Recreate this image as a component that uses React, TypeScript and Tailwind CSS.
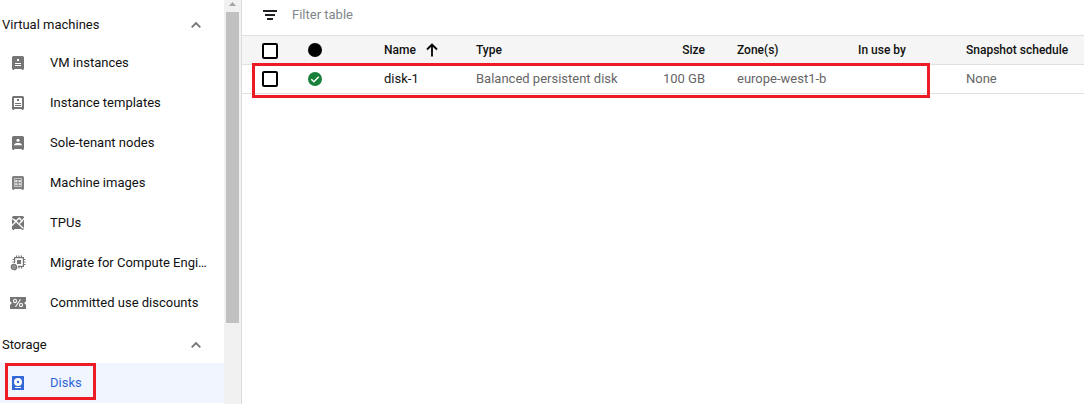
import type { ReactNode } from "react";

const G = "#757575";

const Icon = ({ children }: { children: ReactNode }) => (
  <svg viewBox="0 0 16 16" className="h-4 w-4 shrink-0">
    {children}
  </svg>
);

const body = "M3.500 1h9A1.500 1.500 0 0 1 14 2.500V14h-.6v1h-1.600v-1H4.200v1H2.600v-1H2V2.500A1.500 1.500 0 0 1 3.500 1Z";

const VmIcon = () => (
  <Icon>
    <path fill={G} d={body} />
    <path fill="#fff" d="M7 4h2v2H7zM5 8h6v1H5zM5 10h6v1H5z" />
  </Icon>
);

const TemplateIcon = () => (
  <Icon>
    <path fill={G} d={body} />
    <path fill="#fff" d="M4 3h8v9H4z" />
    <path fill={G} d="M7 4h2v2H7zM5 8h6v1H5zM5 10h6v1H5z" />
  </Icon>
);

const TenantIcon = () => (
  <Icon>
    <path fill={G} d={body} />
    <circle cx="8" cy="5.200" r="1.500" fill="#fff" />
    <path fill="#fff" d="M4 10.200C4 8.600 6 8 8 8s4 .6 4 2.200Z" />
  </Icon>
);

const ImageIcon = () => (
  <Icon>
    <path fill="#808080" d={body} />
    <path fill="none" stroke="#c4c4c4" strokeWidth="1" d="M4.500 3.500h7v8h-7z" />
    <path fill="#e4e4e4" d="M5.200 5h2.300v2.200H5.200zM8.500 5h2.300v2.200H8.500zM5.200 8.200h2.300v2H5.200zM8.500 8.200h2.300v2H8.500z" />
  </Icon>
);

const TpuIcon = () => (
  <Icon>
    <path fill={G} d={body} />
    <path fill="none" stroke="#fff" strokeWidth="1.200" d="M2 3.500l2.500 1.500L13.500 13.500M2 10.500l3.500-3.500M6 6l3.200-3M9.500 8.500l2-2L14 3.500M10 3.500l2 3" />
    <circle cx="5" cy="5.500" r="1.100" fill="#fff" />
    <circle cx="9.500" cy="3.500" r="1" fill="#fff" />
    <circle cx="11.500" cy="6.500" r="1" fill="#fff" />
  </Icon>
);

const MigrateIcon = () => (
  <Icon>
    <path
      fill="none"
      stroke={G}
      strokeWidth="1.2"
      d="M4.600 8V2.600h8.800v8.800H8M6.500 2.500V.4M9 2.500V.4M11.500 2.500V.4M13.500 4.500h2M13.500 7h2M13.500 9.500h2M4.500 4.500h-2M4.500 7h-2M9 11.500v2M11.500 11.500v2"
    />
    <path fill={G} d="M7 5h4v4H7z" />
    <circle cx="4" cy="12" r="2.500" fill="#ccc" stroke={G} strokeWidth="1.700" />
    <path stroke={G} d="M4 10.500v3M2.500 12h3" />
  </Icon>
);

const DiscountIcon = () => (
  <Icon>
    <path fill={G} d="M0 2h16v4.500a1.500 1.500 0 0 0 0 3V14H0V9.500a1.500 1.500 0 0 0 0-3Z" />
    <g fill="none" stroke="#fff" strokeWidth="1.100">
      <ellipse cx="5" cy="6" rx="1.500" ry="1.700" />
      <ellipse cx="11" cy="10" rx="1.500" ry="1.700" />
      <path d="M10.500 4.200l-5 7.600" />
    </g>
  </Icon>
);

const DiskIcon = () => (
  <Icon>
    <rect x="2" y="1" width="12" height="14" rx=".6" fill="#3367d6" />
    <circle cx="8" cy="7" r="4" fill="#fff" />
    <circle cx="8" cy="7" r="1.200" fill="#3367d6" />
    <path fill="#fff" d="M5 12h6v1H5z" />
  </Icon>
);

const items = [
  { label: "VM instances", icon: <VmIcon /> },
  { label: "Instance templates", icon: <TemplateIcon /> },
  { label: "Sole-tenant nodes", icon: <TenantIcon /> },
  { label: "Machine images", icon: <ImageIcon /> },
  { label: "TPUs", icon: <TpuIcon /> },
  { label: "Migrate for Compute Engi…", icon: <MigrateIcon /> },
  { label: "Committed use discounts", icon: <DiscountIcon /> },
];

const SectionHeader = ({ children }: { children: string }) => (
  <div className="flex h-10 shrink-0 items-center justify-between pr-[23px] pl-[2px]">
    <span className="pt-[4px]">{children}</span>
    <svg viewBox="0 0 10 6" className="mt-[3px] h-[6px] w-[10px]">
      <path d="M.7 5.300 5 1l4.300 4.300" fill="none" stroke="#757575" strokeWidth="1.800" />
    </svg>
  </div>
);

const Checkbox = () => <span className="block h-4 w-4 rounded-[2px] border-2 border-black bg-white" />;

const columns = "grid grid-cols-[20px_46px_56px_92px_147px_82px_32px_121px_108px_1fr] items-center whitespace-nowrap";

export default function App() {
  return (
    <div className="relative flex h-[404px] w-[1084px] overflow-hidden bg-white font-['Roboto',sans-serif] text-[13px] leading-5 text-[#111]">
      <nav className="flex w-[224px] shrink-0 flex-col pt-[3px]">
        <SectionHeader>Virtual machines</SectionHeader>
        {items.map((item) => (
          <div key={item.label} className="flex h-10 shrink-0 items-center gap-6 pl-[10px]">
            {item.icon}
            <span className="whitespace-nowrap">{item.label}</span>
          </div>
        ))}
        <SectionHeader>Storage</SectionHeader>
        <div className="relative flex h-10 shrink-0 items-center gap-6 bg-[#f0f5ff] pl-[10px] text-[#3367d6]">
          <DiskIcon />
          <span>Disks</span>
          <span className="absolute top-0 left-[5px] h-[37px] w-[91px] border-3 border-[#ed1c24]" />
        </div>
      </nav>

      <div className="flex w-[17px] shrink-0 flex-col items-center bg-[#f1f1f1]">
        <svg viewBox="0 0 17 12" className="h-3 w-[17px] shrink-0">
          <path d="M5 6h7L8.500 2Z" fill="#a3a3a3" />
        </svg>
        <div className="h-[311px] w-[13px] bg-[#c1c1c1]" />
      </div>

      <main className="relative min-w-0 flex-1 border-l border-[#dcdcdc]">
        <div className="flex h-[35px] items-center pb-[5px] pl-[21px]">
          <svg viewBox="0 0 14 10" className="h-[10px] w-[14px]">
            <path d="M0 0h14v2H0zM2 4h10v2H2zM4 8h6v2H4z" fill="#202124" />
          </svg>
          <span className="ml-[15px] text-[#80868b]">Filter table</span>
        </div>
        <div className={`${columns} h-[30px] border-y border-[#e0e0e0] bg-[#f5f5f5] pl-5 text-[12px] font-medium`}>
          <div className="pt-px">
            <Checkbox />
          </div>
          <span className="ml-[26px] h-[14px] w-[14px] rounded-full bg-black" />
          <span />
          <span className="flex items-center">
            Name
            <svg viewBox="0 0 12 14" className="ml-[10px] h-[14px] w-3">
              <path d="M6 13.500V1.500M1 6.500l5-5 5 5" fill="none" stroke="#000" strokeWidth="1.800" />
            </svg>
          </span>
          <span>Type</span>
          <span className="text-right">Size</span>
          <span />
          <span>Zone(s)</span>
          <span>In use by</span>
          <span>Snapshot schedule</span>
        </div>
        <div className={`${columns} h-[29px] border-b border-[#e0e0e0] pl-5 text-[#666]`}>
          <Checkbox />
          <svg viewBox="0 0 14 14" className="ml-[26px] h-[14px] w-[14px]">
            <circle cx="7" cy="7" r="7" fill="#188038" />
            <path d="M3.300 7.200 5.900 9.700 10.800 4.700" fill="none" stroke="#fff" strokeWidth="1.500" />
          </svg>
          <span />
          <span className="text-[#111]">disk-1</span>
          <span>Balanced persistent disk</span>
          <span className="text-right">100 GB</span>
          <span />
          <span>europe-west1-b</span>
          <span />
          <span>None</span>
        </div>
        <span className="absolute top-[63px] left-[10px] h-[35px] w-[678px] border-3 border-[#ed1c24]" />
      </main>
    </div>
  );
}
